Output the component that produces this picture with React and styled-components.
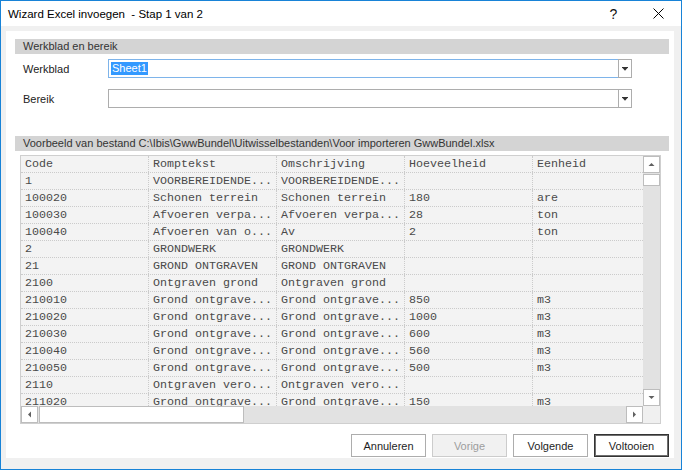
import React from "react";
import styled, { createGlobalStyle } from "styled-components";

const GlobalStyle = createGlobalStyle`
  html, body {
    margin: 0;
    padding: 0;
    background: #fff;
  }
  body {
    font-family: "Liberation Sans", Arial, sans-serif;
  }
`;

const Window = styled.div`
  width: 682px;
  height: 470px;
  box-sizing: border-box;
  border: 1px solid #1883d7;
  display: flex;
  flex-direction: column;
  background: #f0f0f0;
  overflow: hidden;
  font-family: "Liberation Sans", Arial, sans-serif;
`;

const TitleBar = styled.div`
  height: 25px;
  flex: none;
  background: #fff;
  display: flex;
  align-items: center;
  padding-left: 7px;
`;

const Title = styled.div`
  flex: 1;
  font-size: 11.5px;
  color: #000;
  white-space: pre;
`;

const TitleButton = styled.div`
  width: 45px;
  height: 25px;
  display: flex;
  align-items: center;
  justify-content: center;
  font-size: 14px;
  color: #111;
`;

const Body = styled.div`
  flex: 1;
  display: flex;
  padding: 5px 7px 11px 5px;
`;

const Panel = styled.div`
  flex: 1;
  background: #fff;
  display: flex;
  flex-direction: column;
  padding: 8px 5px 1px 9px;
`;

const SectionHeader = styled.div`
  height: 15px;
  line-height: 15px;
  background: #d4d4d4;
  padding-left: 8px;
  font-size: 11px;
  color: #333;
  white-space: nowrap;
  margin-top: ${(p) => p.$gap}px;
`;

const FieldRow = styled.div`
  display: flex;
  align-items: center;
  height: 19px;
  margin-top: ${(p) => p.$gap}px;
  padding-left: 8px;
`;

const Label = styled.div`
  width: 85px;
  font-size: 11px;
  color: #222;
`;

const Combo = styled.div`
  display: flex;
  width: 524px;
  height: 19px;
`;

const ComboText = styled.div`
  flex: 1;
  box-sizing: border-box;
  border: 1px solid ${(p) => (p.$focused ? "#7eb4ea" : "#adadad")};
  border-right: none;
  display: flex;
  align-items: center;
  padding-left: 2px;
`;

const Selection = styled.span`
  background: #3399ff;
  color: #fff;
  font-size: 11px;
  line-height: 13px;
  padding: 0 1px;
`;

const ComboButton = styled.div`
  width: 14px;
  box-sizing: border-box;
  border: 1px solid #adadad;
  display: flex;
  align-items: center;
  justify-content: center;
`;

const Grid = styled.div`
  margin: 4px 8px 0 5px;
  height: 269px;
  box-sizing: border-box;
  border: 1px solid #cfcfcf;
  display: grid;
  grid-template-columns: 1fr 17px;
  grid-template-rows: 1fr 17px;
  overflow: hidden;
`;

const Viewport = styled.div`
  background: #f3f3f3;
  overflow: hidden;
`;

const Row = styled.div`
  display: flex;
  height: 17px;
  box-sizing: border-box;
  border-bottom: 1px dotted #cbcbcb;
`;

const Cell = styled.div`
  width: ${(p) => p.$w}px;
  flex: none;
  box-sizing: border-box;
  border-right: 1px dotted #cbcbcb;
  padding-left: 4px;
  font-family: "Liberation Mono", "Courier New", monospace;
  font-size: 11.67px;
  line-height: 16px;
  color: #4a4a4a;
  white-space: pre;
  overflow: hidden;
`;

const VScroll = styled.div`
  background: #e2e2e2;
  display: flex;
  flex-direction: column;
`;

const HScroll = styled.div`
  background: #e2e2e2;
  display: flex;
`;

const ScrollButton = styled.div`
  width: 17px;
  height: 17px;
  flex: none;
  box-sizing: border-box;
  background: #fff;
  border: 1px solid #bdbdbd;
  display: flex;
  align-items: center;
  justify-content: center;
  margin-top: ${(p) => (p.$end ? "auto" : "0")};
  margin-left: ${(p) => (p.$endH ? "auto" : "0")};
`;

const Thumb = styled.div`
  flex: none;
  box-sizing: border-box;
  background: #fff;
  border: 1px solid #bdbdbd;
  width: ${(p) => (p.$vertical ? "17px" : "205px")};
  height: ${(p) => (p.$vertical ? "12px" : "17px")};
  margin-top: ${(p) => (p.$vertical ? "1px" : "0")};
  margin-left: ${(p) => (p.$vertical ? "0" : "1px")};
`;

const Corner = styled.div`
  background: #f0f0f0;
`;

const ButtonRow = styled.div`
  display: flex;
  justify-content: flex-end;
  gap: 6px;
  margin-top: 10px;
`;

const DialogButton = styled.button`
  width: 75px;
  height: 23px;
  box-sizing: border-box;
  font-family: "Liberation Sans", Arial, sans-serif;
  font-size: 11px;
  padding: 0;
  background: ${(p) => (p.disabled ? "#f1f1f1" : "#fff")};
  color: ${(p) => (p.disabled ? "#9d9d9d" : "#1e1e1e")};
  border: 1px solid ${(p) => (p.$default ? "#333" : p.disabled ? "#cccccc" : "#adadad")};
  box-shadow: ${(p) => (p.$default ? "inset 0 0 0 1px #6f6f6f" : "none")};
`;

const widths = [128, 128, 128, 128, 112];

const rows = [
  ["Code", "Romptekst", "Omschrijving", "Hoeveelheid", "Eenheid"],
  ["1", "VOORBEREIDENDE...", "VOORBEREIDENDE...", "", ""],
  ["100020", "Schonen terrein", "Schonen terrein", "180", "are"],
  ["100030", "Afvoeren verpa...", "Afvoeren verpa...", "28", "ton"],
  ["100040", "Afvoeren van o...", "Av", "2", "ton"],
  ["2", "GRONDWERK", "GRONDWERK", "", ""],
  ["21", "GROND ONTGRAVEN", "GROND ONTGRAVEN", "", ""],
  ["2100", "Ontgraven grond", "Ontgraven grond", "", ""],
  ["210010", "Grond ontgrave...", "Grond ontgrave...", "850", "m3"],
  ["210020", "Grond ontgrave...", "Grond ontgrave...", "1000", "m3"],
  ["210030", "Grond ontgrave...", "Grond ontgrave...", "600", "m3"],
  ["210040", "Grond ontgrave...", "Grond ontgrave...", "560", "m3"],
  ["210050", "Grond ontgrave...", "Grond ontgrave...", "500", "m3"],
  ["2110", "Ontgraven vero...", "Ontgraven vero...", "", ""],
  ["211020", "Grond ontgrave...", "Grond ontgrave...", "150", "m3"],
];

function Arrow({ dir, color = "#606060" }) {
  const pts = {
    up: "0.5,4 3.5,1 6.5,4",
    down: "0.5,1 3.5,4 6.5,1",
    left: "4,0.5 1,3.5 4,6.5",
    right: "1,0.5 4,3.5 1,6.5",
  }[dir];
  const size = dir === "up" || dir === "down" ? [7, 5] : [5, 7];
  return (
    <svg width={size[0]} height={size[1]} viewBox={`0 0 ${size[0]} ${size[1]}`}>
      <polygon points={pts} fill={color} />
    </svg>
  );
}

function ComboArrow() {
  return (
    <svg width="6" height="4" viewBox="0 0 6 4">
      <rect x="0" y="0" width="6" height="1" fill="#333" />
      <polygon points="0.5,1 5.5,1 3,3.8" fill="#333" />
    </svg>
  );
}

function CloseIcon() {
  return (
    <svg width="11" height="11" viewBox="0 0 11 11">
      <path d="M0.5 0.5 L10.5 10.5 M10.5 0.5 L0.5 10.5" stroke="#000" strokeWidth="1" />
    </svg>
  );
}

function ComboBox({ focused, value }) {
  return (
    <Combo>
      <ComboText $focused={focused}>
        {value && <Selection>{value}</Selection>}
      </ComboText>
      <ComboButton>
        <ComboArrow />
      </ComboButton>
    </Combo>
  );
}

export default function App() {
  return (
    <>
      <GlobalStyle />
      <Window>
        <TitleBar>
          <Title>Wizard Excel invoegen  - Stap 1 van 2</Title>
          <TitleButton>?</TitleButton>
          <TitleButton>
            <CloseIcon />
          </TitleButton>
        </TitleBar>
        <Body>
          <Panel>
            <SectionHeader $gap={0}>Werkblad en bereik</SectionHeader>
            <FieldRow $gap={5}>
              <Label>Werkblad</Label>
              <ComboBox focused value="Sheet1" />
            </FieldRow>
            <FieldRow $gap={11}>
              <Label>Bereik</Label>
              <ComboBox />
            </FieldRow>
            <SectionHeader $gap={28}>
              Voorbeeld van bestand C:\Ibis\GwwBundel\Uitwisselbestanden\Voor importeren GwwBundel.xlsx
            </SectionHeader>
            <Grid>
              <Viewport>
                {rows.map((r, i) => (
                  <Row key={i}>
                    {r.map((c, j) => (
                      <Cell key={j} $w={widths[j]}>
                        {c}
                      </Cell>
                    ))}
                  </Row>
                ))}
              </Viewport>
              <VScroll>
                <ScrollButton>
                  <Arrow dir="up" />
                </ScrollButton>
                <Thumb $vertical />
                <ScrollButton $end>
                  <Arrow dir="down" />
                </ScrollButton>
              </VScroll>
              <HScroll>
                <ScrollButton>
                  <Arrow dir="left" />
                </ScrollButton>
                <Thumb />
                <ScrollButton $endH>
                  <Arrow dir="right" />
                </ScrollButton>
              </HScroll>
              <Corner />
            </Grid>
            <ButtonRow>
              <DialogButton>Annuleren</DialogButton>
              <DialogButton disabled>Vorige</DialogButton>
              <DialogButton>Volgende</DialogButton>
              <DialogButton $default>Voltooien</DialogButton>
            </ButtonRow>
          </Panel>
        </Body>
      </Window>
    </>
  );
}
